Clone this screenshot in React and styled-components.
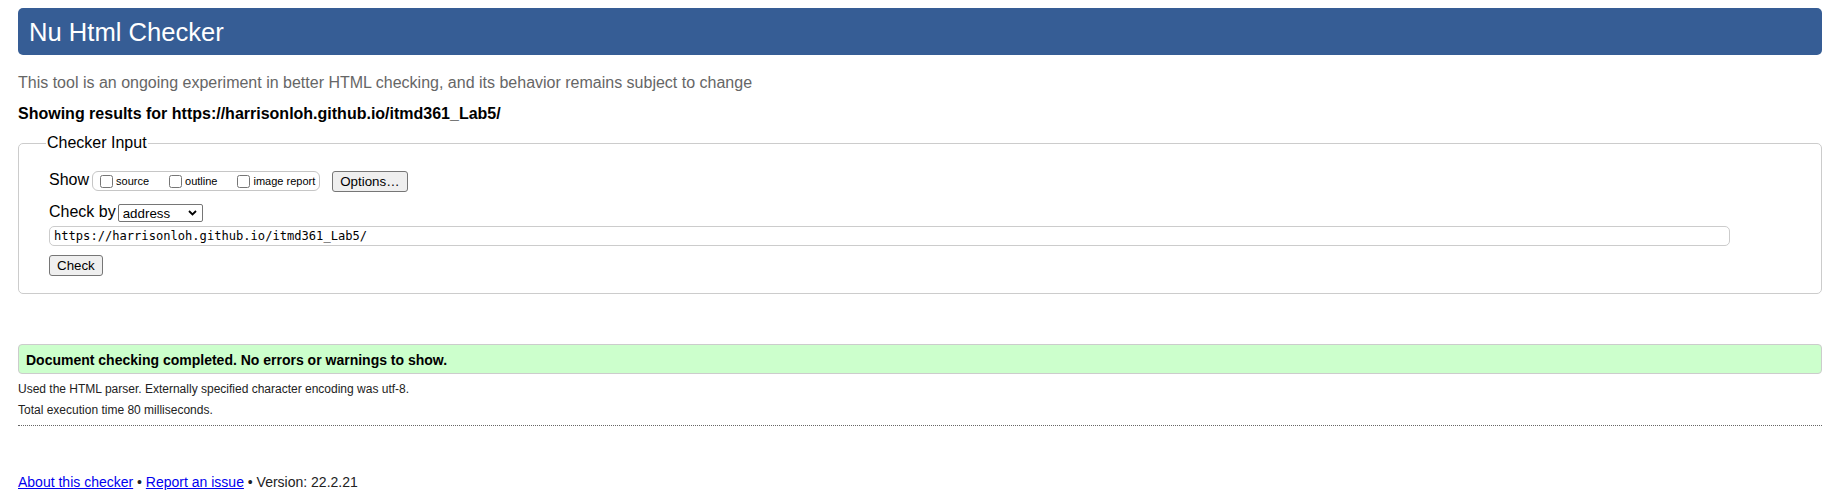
import React from 'react';
import styled, { createGlobalStyle } from 'styled-components';

const GlobalStyle = createGlobalStyle`
  html, body { margin: 0; padding: 0; background: #ffffff; }
  body { font-family: "Liberation Sans", Arial, sans-serif; color: #000; }
`;

const Page = styled.div`
  display: flex;
  flex-direction: column;
  padding: 8px 10px 0 18px;
`;

const Title = styled.h1`
  margin: 0;
  height: 47px;
  box-sizing: border-box;
  padding: 0 10px 0 11px;
  display: flex;
  align-items: center;
  background: #365d95;
  color: #ffffff;
  border-radius: 5px;
  font-size: 25.6px;
  font-weight: normal;
  line-height: 30px;
`;

const Intro = styled.p`
  margin: 19px 0 0;
  color: #666666;
  font-size: 16px;
  line-height: 18px;
`;

const Showing = styled.p`
  margin: 13px 0 0;
  font-size: 16px;
  font-weight: bold;
  line-height: 18px;
  color: #000;
`;

const Fieldset = styled.fieldset`
  margin: 11px 0 0;
  padding: 0 12px 17px 30px;
  min-width: 0;
  border: 1px solid #cccccc;
  border-radius: 5px;
`;

const Legend = styled.legend`
  padding: 0 1px;
  margin-left: -3px;
  font-size: 16px;
  line-height: 18px;
`;

const Form = styled.div`
  display: flex;
  flex-direction: column;
  padding-top: 19px;
`;

const Row = styled.div`
  display: flex;
  align-items: flex-start;
  margin-top: ${(p) => p.$mt || 0}px;
`;

const Label = styled.span`
  font-size: 16px;
  line-height: 18px;
`;

const OptionGroup = styled.div`
  display: flex;
  align-items: center;
  height: 20px;
  box-sizing: border-box;
  margin-left: 3px;
  padding: 0 4px 0 3px;
  border: 1px solid #c6c6c6;
  border-radius: 6px;
`;

const CheckItem = styled.label`
  display: flex;
  align-items: center;
  font-size: 11px;
  line-height: 13px;
  margin-right: ${(p) => (p.$last ? 0 : 16)}px;
`;

const Checkbox = styled.input`
  width: 13px;
  height: 13px;
  margin: 0 3px 0 4px;
`;

const Button = styled.button`
  height: 21px;
  box-sizing: border-box;
  padding: 0 7px;
  margin-left: ${(p) => p.$ml || 0}px;
  margin-top: ${(p) => p.$mt || 0}px;
  align-self: flex-start;
  font-family: "Liberation Sans", Arial, sans-serif;
  font-size: 13.33px;
  color: #000;
  background: #efefef;
  border: 1px solid #767676;
  border-radius: 3px;
`;

const SelectWrap = styled.span`
  position: relative;
  display: inline-flex;
  margin: 1px 0 0 2px;
`;

const Select = styled.select`
  appearance: none;
  width: 85px;
  height: 18px;
  box-sizing: border-box;
  padding: 0 0 0 4px;
  font-family: "Liberation Sans", Arial, sans-serif;
  font-size: 13.33px;
  color: #000;
  background: #ffffff;
  border: 1px solid #767676;
  border-radius: 2px;
`;

const Chevron = styled.svg`
  position: absolute;
  right: 6px;
  top: 6px;
  pointer-events: none;
`;

const UrlInput = styled.input`
  margin-top: 4px;
  width: calc(100% - 79px);
  height: 20px;
  box-sizing: border-box;
  padding: 0 4px;
  font-family: "DejaVu Sans Mono", "Liberation Mono", monospace;
  font-size: 12.1px;
  color: #000;
  border: 1px solid #cccccc;
  border-radius: 5px;
  outline: none;
`;

const Success = styled.div`
  margin-top: 50px;
  padding: 7px 7px 5px;
  background: #ccffcc;
  border: 1px solid #cccccc;
  border-radius: 4px;
  font-size: 14px;
  font-weight: bold;
  line-height: 16px;
  color: #000;
`;

const Detail = styled.p`
  margin: ${(p) => p.$mt}px 0 0;
  font-size: 12px;
  line-height: 14px;
  color: #222;
`;

const Rule = styled.hr`
  margin: 8px 0 0;
  height: 0;
  border: 0;
  border-top: 1px dotted #666666;
`;

const Footer = styled.p`
  margin: 48px 0 0;
  font-size: 14px;
  line-height: 16px;
  color: #222;
`;

const Link = styled.a`
  color: #0000ee;
  text-decoration: underline;
`;

export default function App() {
  return (
    <>
      <GlobalStyle />
      <Page>
        <Title>Nu Html Checker</Title>
        <Intro>
          This tool is an ongoing experiment in better HTML checking, and its behavior remains subject to change
        </Intro>
        <Showing>Showing results for https://harrisonloh.github.io/itmd361_Lab5/</Showing>
        <Fieldset>
          <Legend>Checker Input</Legend>
          <Form>
            <Row>
              <Label>Show</Label>
              <OptionGroup>
                <CheckItem>
                  <Checkbox type="checkbox" />
                  source
                </CheckItem>
                <CheckItem>
                  <Checkbox type="checkbox" />
                  outline
                </CheckItem>
                <CheckItem $last>
                  <Checkbox type="checkbox" />
                  image report
                </CheckItem>
              </OptionGroup>
              <Button type="button" $ml={12}>Options…</Button>
            </Row>
            <Row $mt={11}>
              <Label>Check by</Label>
              <SelectWrap>
                <Select defaultValue="address">
                  <option value="address">address</option>
                  <option value="file">file upload</option>
                  <option value="text">text input</option>
                </Select>
                <Chevron width="9" height="6" viewBox="0 0 9 6">
                  <path d="M1 1 L4.5 4.5 L8 1" fill="none" stroke="#000" strokeWidth="1.8" />
                </Chevron>
              </SelectWrap>
            </Row>
            <UrlInput type="text" defaultValue="https://harrisonloh.github.io/itmd361_Lab5/" />
            <Button type="button" $mt={9}>Check</Button>
          </Form>
        </Fieldset>
        <Success>Document checking completed. No errors or warnings to show.</Success>
        <Detail $mt={8}>Used the HTML parser. Externally specified character encoding was utf-8.</Detail>
        <Detail $mt={7}>Total execution time 80 milliseconds.</Detail>
        <Rule />
        <Footer>
          <Link href="#about">About this checker</Link> • <Link href="#issue">Report an issue</Link> • Version: 22.2.21
        </Footer>
      </Page>
    </>
  );
}
